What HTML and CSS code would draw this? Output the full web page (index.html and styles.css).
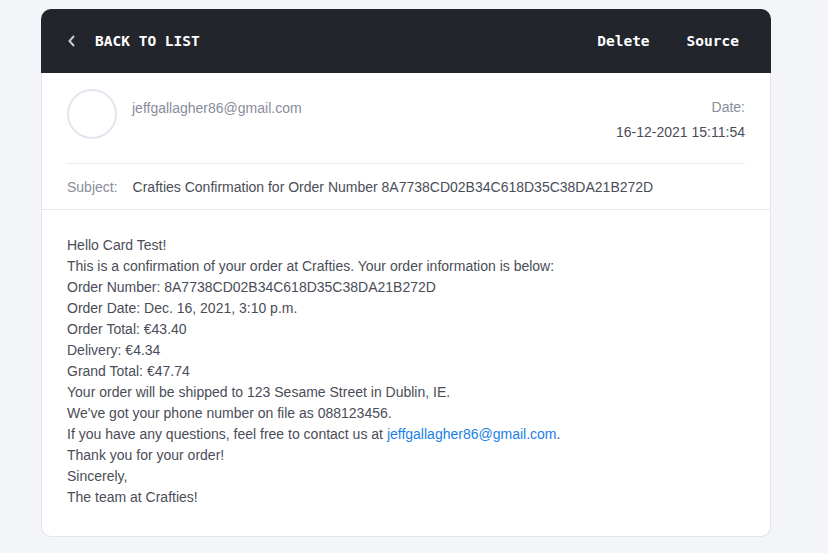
FILE: index.html
```html
<!DOCTYPE html>
<html>
<head>
<meta charset="utf-8">
<link rel="stylesheet" href="styles.css">
</head>
<body>
<div class="card">
  <header class="topbar">
    <a class="back">
      <svg class="chev" width="10" height="14" viewBox="0 0 10 14"><path d="M7 2 L2.5 7 L7 12" fill="none" stroke="#c9ccd3" stroke-width="2"/></svg>
      <span>BACK TO LIST</span>
    </a>
    <nav class="actions">
      <a>Delete</a>
      <a>Source</a>
    </nav>
  </header>
  <div class="content">
    <section class="meta">
      <div class="sender-row">
        <div class="avatar"></div>
        <div class="sender">jeffgallagher86@gmail.com</div>
        <div class="date">
          <div class="date-label">Date:</div>
          <div class="date-value">16-12-2021 15:11:54</div>
        </div>
      </div>
      <div class="subject-row">
        <span class="subject-label">Subject:</span>
        <span class="subject">Crafties Confirmation for Order Number 8A7738CD02B34C618D35C38DA21B272D</span>
      </div>
    </section>
    <section class="body">
      <p>Hello Card Test!</p>
      <p>This is a confirmation of your order at Crafties. Your order information is below:</p>
      <p>Order Number: 8A7738CD02B34C618D35C38DA21B272D</p>
      <p>Order Date: Dec. 16, 2021, 3:10 p.m.</p>
      <p>Order Total: €43.40</p>
      <p>Delivery: €4.34</p>
      <p>Grand Total: €47.74</p>
      <p>Your order will be shipped to 123 Sesame Street in Dublin, IE.</p>
      <p>We've got your phone number on file as 088123456.</p>
      <p>If you have any questions, feel free to contact us at <a class="link">jeffgallagher86@gmail.com</a>.</p>
      <p>Thank you for your order!</p>
      <p>Sincerely,</p>
      <p>The team at Crafties!</p>
    </section>
  </div>
</div>
</body>
</html>
```

FILE: styles.css
```css
html, body {
  margin: 0;
  background: #f4f5f8;
}
body {
  padding: 9px 0 0 41px;
  font-family: "Liberation Sans", Arial, sans-serif;
}
.card {
  width: 730px;
}
.topbar {
  height: 64px;
  background: #22252c;
  border-radius: 10px 10px 0 0;
  display: flex;
  align-items: center;
  justify-content: space-between;
  padding: 0 32px 0 26px;
  font-family: "DejaVu Sans Mono", "Liberation Mono", monospace;
  font-weight: bold;
  font-size: 14.5px;
  color: #fff;
}
.back {
  display: flex;
  align-items: center;
  gap: 18px;
}
.chev { display: block; }
.actions {
  display: flex;
  gap: 37px;
}
.content {
  background: #fff;
  border: 1px solid #e3e4ec;
  border-top: none;
  border-radius: 0 0 10px 10px;
}
.meta {
  padding: 16px 25px 0 25px;
  border-bottom: 1px solid #e8e9ee;
}
.sender-row {
  display: flex;
  align-items: flex-start;
  padding-bottom: 20px;
  border-bottom: 1px solid #e8e9ee;
}
.avatar {
  width: 46px;
  height: 46px;
  border: 2px solid #e4e4ee;
  border-radius: 50%;
  flex: none;
}
.sender {
  margin-left: 15px;
  margin-top: 9px;
  font-size: 14px;
  line-height: 21px;
  color: #898c9b;
  flex: 1;
}
.date {
  text-align: right;
  font-size: 14px;
  margin-top: 8px;
}
.date-label {
  line-height: 21px;
  color: #898c9b;
}
.date-value {
  margin-top: 4px;
  line-height: 21px;
  color: #4a4d57;
}
.subject-row {
  display: flex;
  gap: 15px;
  padding: 13px 0 11px 0;
  font-size: 14px;
  line-height: 21px;
}
.subject-label { color: #898c9b; }
.subject { color: #4a4d57; }
.body {
  padding: 25px 25px 28px 25px;
  font-size: 14px;
  line-height: 21px;
  color: #4a4d57;
}
.body p { margin: 0; }
.link { color: #1a7fe8; }
```
